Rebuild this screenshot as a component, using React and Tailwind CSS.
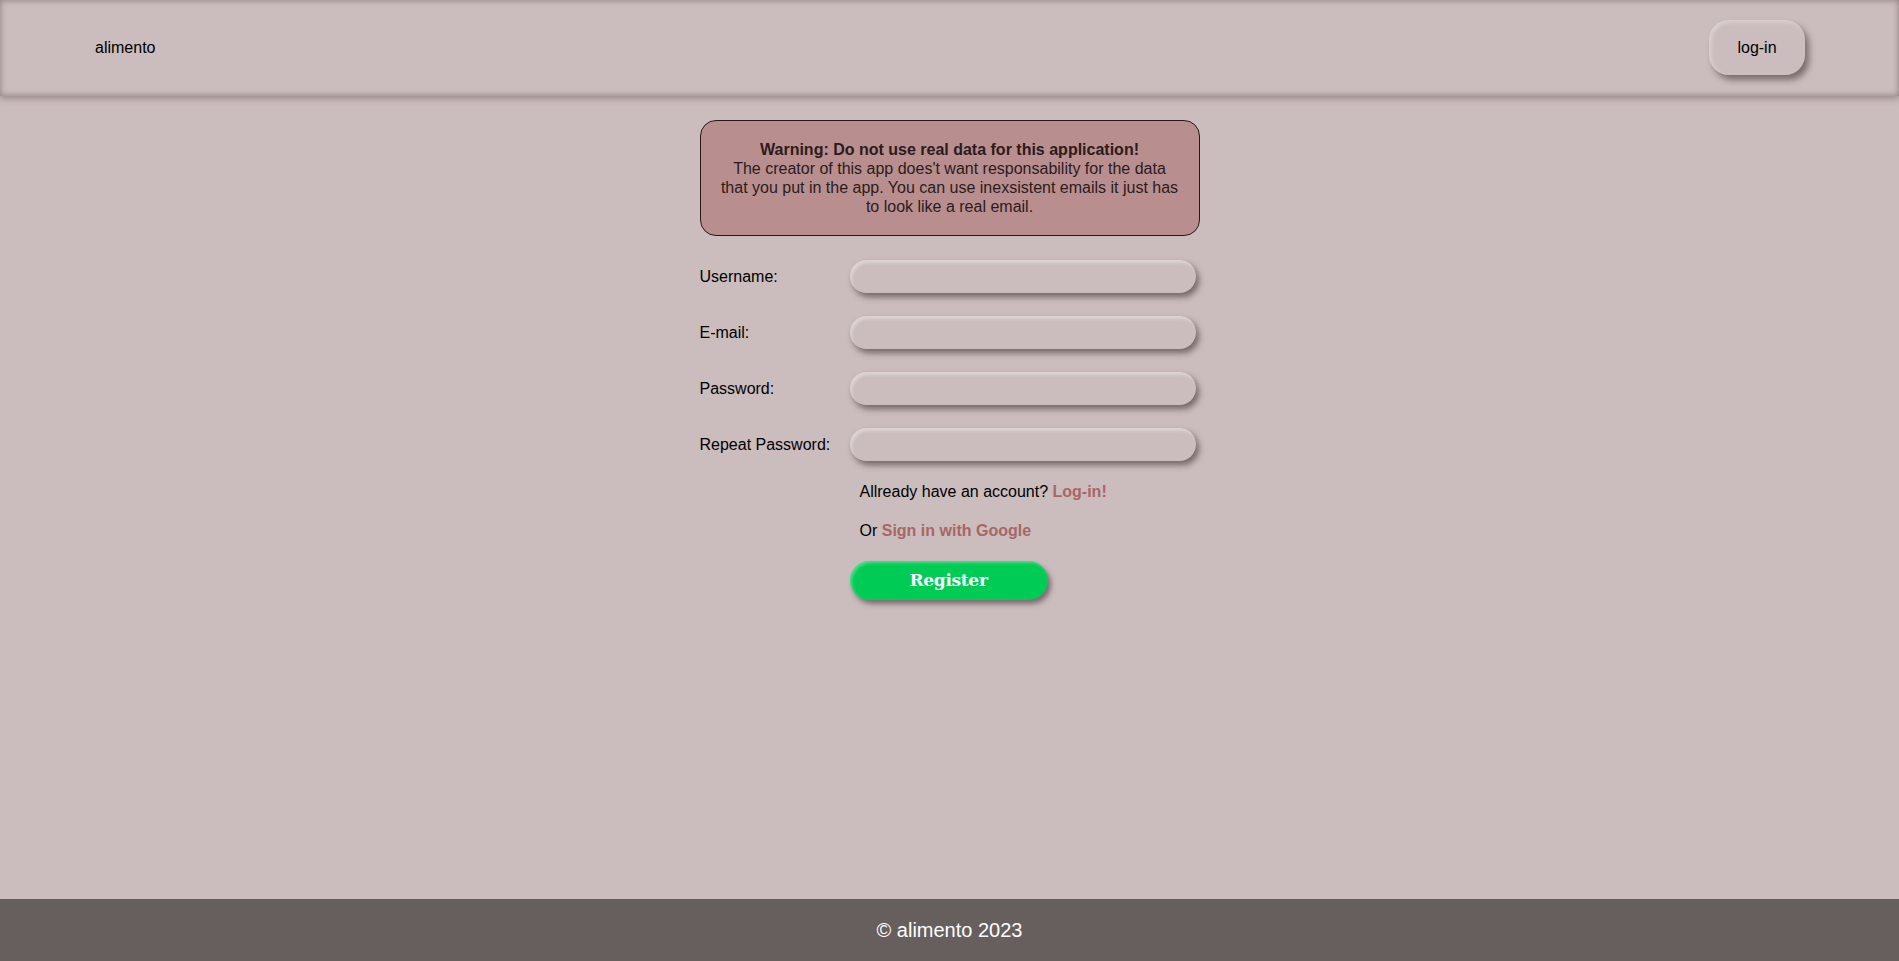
import React from "react";

const font = { fontFamily: '"Liberation Sans", Arial, sans-serif' };

function Field({ label, type = "text" }) {
  return (
    <div className="flex items-center h-[33px] mb-[23px]">
      <label className="w-[150px] shrink-0 text-[16px] text-black">{label}</label>
      <input
        type={type}
        className="w-[346px] h-[33px] rounded-full bg-[#cbbdbd] outline-none px-4 shadow-[inset_2px_3px_3px_rgba(255,255,255,0.35),3px_4px_6px_rgba(70,55,55,0.65)]"
      />
    </div>
  );
}

export default function App() {
  return (
    <div className="min-h-screen flex flex-col bg-[#cbbdbd]" style={font}>
      <header className="h-[96px] shrink-0 flex items-center justify-between pl-[95px] pr-[94px] bg-[#cbbdbd] shadow-[inset_0_0_6px_rgba(60,40,40,0.45),0_3px_6px_rgba(60,40,40,0.3)] relative z-10">
        <span className="text-[16px] text-black">alimento</span>
        <button className="w-[96px] h-[55px] -mt-[1px] rounded-[20px] bg-[#cbbdbd] text-[16px] text-black shadow-[inset_2px_2px_4px_rgba(255,255,255,0.35),4px_5px_6px_rgba(60,45,45,0.55)]">
          log-in
        </button>
      </header>

      <main className="flex-1 flex justify-center">
        <div className="w-[500px] pt-[24px]">
          <div className="border border-[#2a1818] rounded-[16px] bg-[#b98e8e] px-[20px] py-[19px] text-center text-[16px] leading-[19px] text-[#2a1c1c]">
            <b>Warning: Do not use real data for this application!</b>
            <br />
            The creator of this app does't want responsability for the data that you put in the app. You can use inexsistent emails it just has to look like a real email.
          </div>

          <form className="mt-[24px]" onSubmit={(e) => e.preventDefault()}>
            <Field label="Username:" />
            <Field label="E-mail:" type="email" />
            <Field label="Password:" type="password" />
            <Field label="Repeat Password:" type="password" />

            <p className="ml-[160px] -mt-[2px] text-[16px] leading-[19px] text-black">
              Allready have an account? <a className="font-bold text-[#a86666] cursor-pointer">Log-in!</a>
            </p>
            <p className="ml-[160px] mt-[20px] text-[16px] leading-[19px] text-black">
              Or <a className="font-bold text-[#a86666] cursor-pointer">Sign in with Google</a>
            </p>
            <button
              type="submit"
              className="ml-[150px] mt-[21px] w-[198px] h-[39px] rounded-full bg-[#00cc55] text-white font-bold text-[17px] shadow-[inset_2px_2px_3px_rgba(255,255,255,0.3),3px_4px_5px_rgba(60,45,45,0.55)]"
              style={{ fontFamily: '"DejaVu Serif", "Liberation Serif", serif', letterSpacing: "-0.3px" }}
            >
              Register
            </button>
          </form>
        </div>
      </main>

      <footer className="h-[62px] shrink-0 bg-[#675e5e] flex items-center justify-center">
        <span className="text-white text-[20px]">© alimento 2023</span>
      </footer>
    </div>
  );
}
